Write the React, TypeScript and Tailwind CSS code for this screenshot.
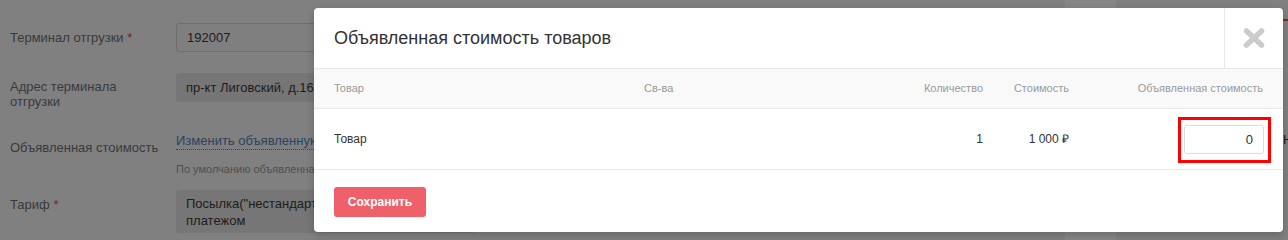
import React from 'react'

const columns = [
  { key: 'name', title: 'Товар', cls: 'w-[310px] pl-5 text-left' },
  { key: 'props', title: 'Св-ва', cls: 'w-[280px] pl-5 text-left' },
  { key: 'qty', title: 'Количество', cls: 'w-[99px] pr-5 text-right' },
  { key: 'price', title: 'Стоимость', cls: 'w-[86px] pr-5 text-right' },
  { key: 'declared', title: 'Объявленная стоимость', cls: 'flex-1 pr-5 text-right' },
]

const BackgroundForm: React.FC = () => (
  <div className="w-[1065px] pt-[23px] text-[13px] text-[#3a3a3a]">
    <div className="flex items-center">
      <div className="w-[176px] pl-[10px]">
        Терминал отгрузки <span className="text-[#7a1c1c]">*</span>
      </div>
      <div className="flex h-[29px] w-[300px] items-center rounded-[3px] border border-[#6f6f6f] bg-[#7f7f7f] pl-[10px] text-[#1c1c1c]">
        192007
      </div>
    </div>

    <div className="mt-[21px] flex items-start">
      <div className="w-[176px] pl-[10px] pt-[6px] leading-[15px]">
        Адрес терминала
        <br />
        отгрузки
      </div>
      <div className="flex h-[29px] w-[300px] items-center rounded-[3px] bg-[#767676] pl-[10px] text-[#1c1c1c]">
        пр-кт Лиговский, д.16
      </div>
    </div>

    <div className="mt-[22px] flex items-start">
      <div className="w-[176px] pl-[10px] pt-[7px]">Объявленная стоимость</div>
      <div>
        <div className="inline-block border-b border-dotted border-[#2d4660] leading-[16px] text-[#2b4360]">
          Изменить объявленную стоимость
        </div>
        <div className="mt-[10px] text-[11px] text-[#4f4f4f]">По умолчанию объявленная стоимость</div>
      </div>
    </div>

    <div className="mt-[13px] flex items-start">
      <div className="w-[176px] pl-[10px] pt-[5px]">
        Тариф <span className="text-[#7a1c1c]">*</span>
      </div>
      <div className="h-[43px] w-[300px] rounded-[3px] bg-[#767676] pl-[10px] pt-[5px] leading-[17px] text-[#1c1c1c]">
        Посылка("нестандартная") с наложенным
        <br />
        платежом
      </div>
    </div>
  </div>
)

const CloseIcon: React.FC = () => (
  <svg width="22" height="20" viewBox="0 0 22 20" fill="none">
    <path d="M3.5 3 L18.5 17 M18.5 3 L3.5 17" stroke="#cccccc" strokeWidth="5.5" strokeLinecap="round" />
  </svg>
)

const DeclaredValueModal: React.FC = () => (
  <div className="absolute left-[314px] top-[8px] w-[969px] overflow-hidden rounded-[4px] bg-white shadow-[0_3px_9px_rgba(0,0,0,0.2)]">
    <div className="flex h-[60px] items-stretch">
      <div className="flex flex-1 items-center pl-5 text-[18px] text-[#333]">Объявленная стоимость товаров</div>
      <button className="flex w-[59px] items-center justify-center border-l border-[#e8e8e8]">
        <CloseIcon />
      </button>
    </div>

    <div className="flex h-[41px] items-center border-y border-[#e8e8e8] bg-[#f9f9f9] text-[11px] text-[#999]">
      {columns.map((col) => (
        <div key={col.key} className={col.cls}>
          {col.title}
        </div>
      ))}
    </div>

    <div className="flex h-[61px] items-center border-b border-[#e8e8e8] text-[12px] text-[#333]">
      <div className={columns[0].cls}>Товар</div>
      <div className={columns[1].cls}></div>
      <div className={columns[2].cls}>1</div>
      <div className={columns[3].cls}>1 000 ₽</div>
      <div className="flex flex-1 justify-end pr-[19px]">
        <div className="relative">
          <input
            readOnly
            value="0"
            className="h-[29px] w-[80px] rounded-[3px] border border-[#dcdcdc] bg-white pr-[10px] text-right text-[13px] text-[#333] outline-none"
          />
          <span className="pointer-events-none absolute -bottom-[9px] -left-[6px] -right-[7px] -top-[8px] border-[3px] border-[#ff0000]" />
        </div>
      </div>
    </div>

    <div className="h-[62px] pl-5 pt-[17px]">
      <button className="h-[30px] w-[92px] rounded-[3px] bg-[#f0606b] text-[12px] font-bold text-white">
        Сохранить
      </button>
    </div>
  </div>
)

export default function App() {
  return (
    <div className="relative h-[240px] w-[1288px] overflow-hidden bg-[#808080] font-['Liberation_Sans',Arial,sans-serif]">
      <div className="flex h-[240px]">
        <BackgroundForm />
        <div className="h-[240px] w-[51px] bg-[#868686]" />
        <div className="flex-1" />
        <div className="w-[5px] pt-[19px] text-[13px] text-[#1c1c1c]">
          <div className="h-[2px] bg-[#7a2a2a]" />
          <div className="mt-[111px] leading-[16px]">Н</div>
        </div>
      </div>
      <DeclaredValueModal />
    </div>
  )
}
